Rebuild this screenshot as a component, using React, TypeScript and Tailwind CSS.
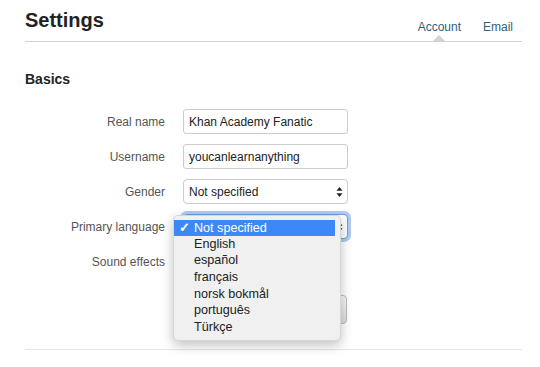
import React from "react";

const font = { fontFamily: '"Liberation Sans", Arial, sans-serif' };

function Arrows() {
  return (
    <svg width="7" height="11" viewBox="0 0 7 11" className="absolute right-[4px] top-1/2 -translate-y-1/2">
      <path d="M3.5 0.5 L6.5 4.2 L0.5 4.2 Z" fill="#222" />
      <path d="M3.5 10.5 L6.5 6.8 L0.5 6.8 Z" fill="#222" />
    </svg>
  );
}

export default function App() {
  const langs = ["English", "español", "français", "norsk bokmål", "português", "Türkçe"];
  return (
    <div className="w-[540px] h-[367px] bg-white overflow-hidden pl-[25px] pr-[18px]" style={font}>
      <div className="h-[42px] border-b border-[#d3d3d3] flex justify-between">
        <div className="mt-[8px] text-[20px] leading-[24px] font-bold text-[#222]">Settings</div>
        <div className="flex gap-[22px] pr-[9px] mt-[19px] text-[12px] leading-[16px] text-[#2e5f7d]">
          <div className="relative h-[22px]">
            Account
            <div className="absolute left-1/2 -translate-x-1/2 bottom-0 w-0 h-0 border-l-[6px] border-r-[6px] border-b-[6px] border-l-transparent border-r-transparent border-b-[#d3d3d3]" />
          </div>
          <div>Email</div>
        </div>
      </div>

      <div className="mt-[29px] text-[14px] leading-[17px] font-bold text-[#222]">Basics</div>

      <div className="mt-[21px] grid grid-cols-[140px_165px] gap-x-[18px] gap-y-[10px] items-center text-[12px]">
        <div className="text-right text-[#555]">Real name</div>
        <div className="h-[25px] border border-[#ccc] rounded-[3px] px-[5px] flex items-center text-[#222]">Khan Academy Fanatic</div>

        <div className="text-right text-[#555]">Username</div>
        <div className="h-[25px] border border-[#ccc] rounded-[3px] px-[5px] flex items-center text-[#222]">youcanlearnanything</div>

        <div className="text-right text-[#555]">Gender</div>
        <div className="relative h-[25px] border border-[#ccc] rounded-[4px] px-[5px] flex items-center text-[#222] bg-white">
          Not specified
          <Arrows />
        </div>

        <div className="text-right text-[#555]">Primary language</div>
        <div className="relative h-[25px] border border-[#6a9fe0] rounded-[4px] px-[5px] flex items-center text-[#222] bg-white shadow-[0_0_0_3px_rgba(110,160,235,0.55)]">
          <Arrows />
          <div className="absolute -left-[11px] top-0 w-[168px] pt-[4px] pb-[4px] rounded-[5px] bg-[#f0f0f0] border border-[#d6d6d6] shadow-[0_4px_12px_rgba(0,0,0,0.25)] z-10 text-[12.6px] text-[#222]">
            <div className="h-[16px] mr-[5px] bg-[#3d88f5] text-white flex items-center">
              <span className="w-[20px] pl-[5px] text-[13px] font-bold">✓</span>
              <span>Not specified</span>
            </div>
            {langs.map((l) => (
              <div key={l} className="h-[16.6px] flex items-center pl-[20px]">{l}</div>
            ))}
          </div>
        </div>

        <div className="text-right text-[#555]">Sound effects</div>
        <div className="h-[25px]" />

        <div />
        <div className="mt-[11px] h-[29px] w-[164px] border border-[#bbb] rounded-[4px] bg-gradient-to-b from-[#f8f8f8] to-[#dcdcdc]" />
      </div>

      <div className="mt-[25px] border-t border-[#e6e6e6]" />
    </div>
  );
}
